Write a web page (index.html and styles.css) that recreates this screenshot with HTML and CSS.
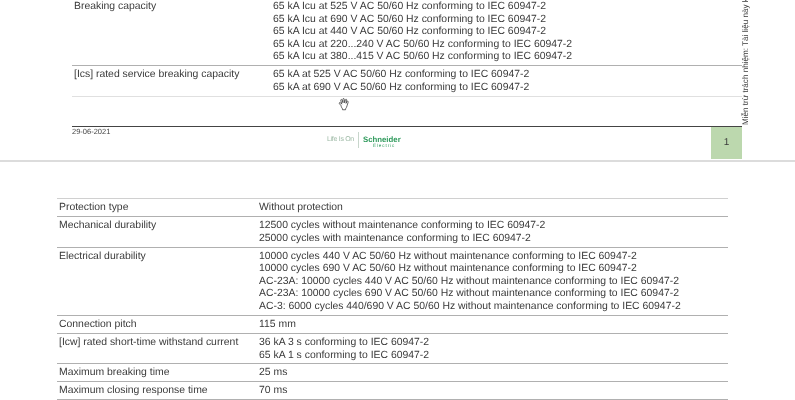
FILE: index.html
```html
<!DOCTYPE html>
<html lang="en">
<head>
<meta charset="utf-8">
<title>Datasheet</title>
<link rel="stylesheet" href="styles.css">
</head>
<body>
<section class="page page-one">
  <div class="spec spec-one">
    <div class="row">
      <div class="label">Breaking capacity</div>
      <div class="value">
        <div>65 kA Icu at 525 V AC 50/60 Hz conforming to IEC 60947-2</div>
        <div>65 kA Icu at 690 V AC 50/60 Hz conforming to IEC 60947-2</div>
        <div>65 kA Icu at 440 V AC 50/60 Hz conforming to IEC 60947-2</div>
        <div>65 kA Icu at 220...240 V AC 50/60 Hz conforming to IEC 60947-2</div>
        <div>65 kA Icu at 380...415 V AC 50/60 Hz conforming to IEC 60947-2</div>
      </div>
    </div>
    <div class="row row-last">
      <div class="label">[Ics] rated service breaking capacity</div>
      <div class="value">
        <div>65 kA at 525 V AC 50/60 Hz conforming to IEC 60947-2</div>
        <div>65 kA at 690 V AC 50/60 Hz conforming to IEC 60947-2</div>
      </div>
    </div>
    <svg class="cursor" width="12" height="13" viewBox="0 0 13 14" aria-hidden="true">
      <path d="M3.500 8.500 1.600 6.200c-.8-1 .4-1.900 1.200-1l1.300 1.400L3 2.600c-.3-1.100 1-1.500 1.400-.5l1 3L5.300 1.300c0-1.100 1.400-1.100 1.500 0l.3 3.800.9-3.200c.3-1 1.600-.7 1.400.4l-.7 3.400 1-1.800c.5-.9 1.700-.4 1.300.6l-1.200 3.900c-.4 1.500-.8 2.300-1.600 3.300v1H4.900v-1c-.6-.7-1-1.300-1.400-2.700Z" fill="#fff" stroke="#444" stroke-width=".9" stroke-linejoin="round"/>
    </svg>
    <div class="side-note">Miễn trừ trách nhiệm: Tài liệu này kh</div>
  </div>
  <footer class="foot">
    <div class="date">29-06-2021</div>
    <div class="logo">
      <span class="tagline">Life Is On</span>
      <span class="brand"><span class="brand-name">Schneider</span><span class="brand-sub">Electric</span></span>
    </div>
    <div class="page-no">1</div>
  </footer>
</section>
<section class="page page-two">
  <div class="spec spec-two">
    <div class="row"><div class="label">Protection type</div><div class="value"><div>Without protection</div></div></div>
    <div class="row"><div class="label">Mechanical durability</div><div class="value">
      <div>12500 cycles without maintenance conforming to IEC 60947-2</div>
      <div>25000 cycles with maintenance conforming to IEC 60947-2</div>
    </div></div>
    <div class="row"><div class="label">Electrical durability</div><div class="value">
      <div>10000 cycles 440 V AC 50/60 Hz without maintenance conforming to IEC 60947-2</div>
      <div>10000 cycles 690 V AC 50/60 Hz without maintenance conforming to IEC 60947-2</div>
      <div>AC-23A: 10000 cycles 440 V AC 50/60 Hz without maintenance conforming to IEC 60947-2</div>
      <div>AC-23A: 10000 cycles 690 V AC 50/60 Hz without maintenance conforming to IEC 60947-2</div>
      <div>AC-3: 6000 cycles 440/690 V AC 50/60 Hz without maintenance conforming to IEC 60947-2</div>
    </div></div>
    <div class="row"><div class="label">Connection pitch</div><div class="value"><div>115 mm</div></div></div>
    <div class="row"><div class="label">[Icw] rated short-time withstand current</div><div class="value">
      <div>36 kA 3 s conforming to IEC 60947-2</div>
      <div>65 kA 1 s conforming to IEC 60947-2</div>
    </div></div>
    <div class="row"><div class="label">Maximum breaking time</div><div class="value"><div>25 ms</div></div></div>
    <div class="row"><div class="label">Maximum closing response time</div><div class="value"><div>70 ms</div></div></div>
  </div>
</section>
</body>
</html>
```
FILE: styles.css
```css
* { box-sizing: border-box; }
html, body { margin: 0; height: 400px; overflow: hidden; background: #fff; }
body { font-family: "Liberation Sans", Arial, sans-serif; font-size: 10.42px; line-height: 12.6px; color: #3a3a3a; text-rendering: geometricPrecision; filter: blur(.3px); }
.page-one { height: 162px; padding: 0 53px 0 72px; border-bottom: 2px solid #dcdcdc; }
.spec { position: relative; }
.spec-one { height: 127px; border-bottom: 1px solid #444; }
.row { display: flex; border-bottom: 1px solid #b0b0b0; }
.label { flex: none; }
.spec-one .row { padding: 1px 0 1px; }
.spec-one .row + .row { padding-top: 3px; }
.spec-one .row-last { border-bottom-color: #e0e0e0; padding-bottom: 2px; }
.spec-one .label { width: 201px; padding-left: 2px; }
.cursor { position: absolute; left: 266px; top: 98px; }
.side-note { position: absolute; left: 669px; top: 125px; font-size: 8.1px; line-height: 10px; white-space: nowrap; transform-origin: 0 0; transform: rotate(-90deg); }
.foot { display: flex; height: 32px; position: relative; }
.date { font-size: 7.5px; line-height: 9px; color: #444; flex: 1; }
.logo { position: absolute; left: 255px; top: 5px; display: flex; align-items: center; height: 16px; }
.tagline { font-size: 7px; color: #9db9a5; padding-right: 4px; border-right: 1px solid #c8d6cc; line-height: 16px; letter-spacing: -.3px; }
.brand { display: flex; flex-direction: column; padding: 4px 0 0 4px; color: #2f9a5c; }
.brand-name { font-size: 7.8px; line-height: 7px; font-weight: 700; }
.brand-sub { font-size: 4.6px; line-height: 5px; letter-spacing: .9px; padding-left: 10px; }
.page-no { width: 31px; background: #bcd8ae; text-align: center; line-height: 32px; font-size: 10px; }
.page-two { padding: 36px 67px 0 57px; }
.spec-two { border-top: 1px solid #d0d0d0; }
.spec-two .row { padding: 3px 0 1.4px; }
.spec-two .label { width: 202px; padding-left: 2px; }
```
